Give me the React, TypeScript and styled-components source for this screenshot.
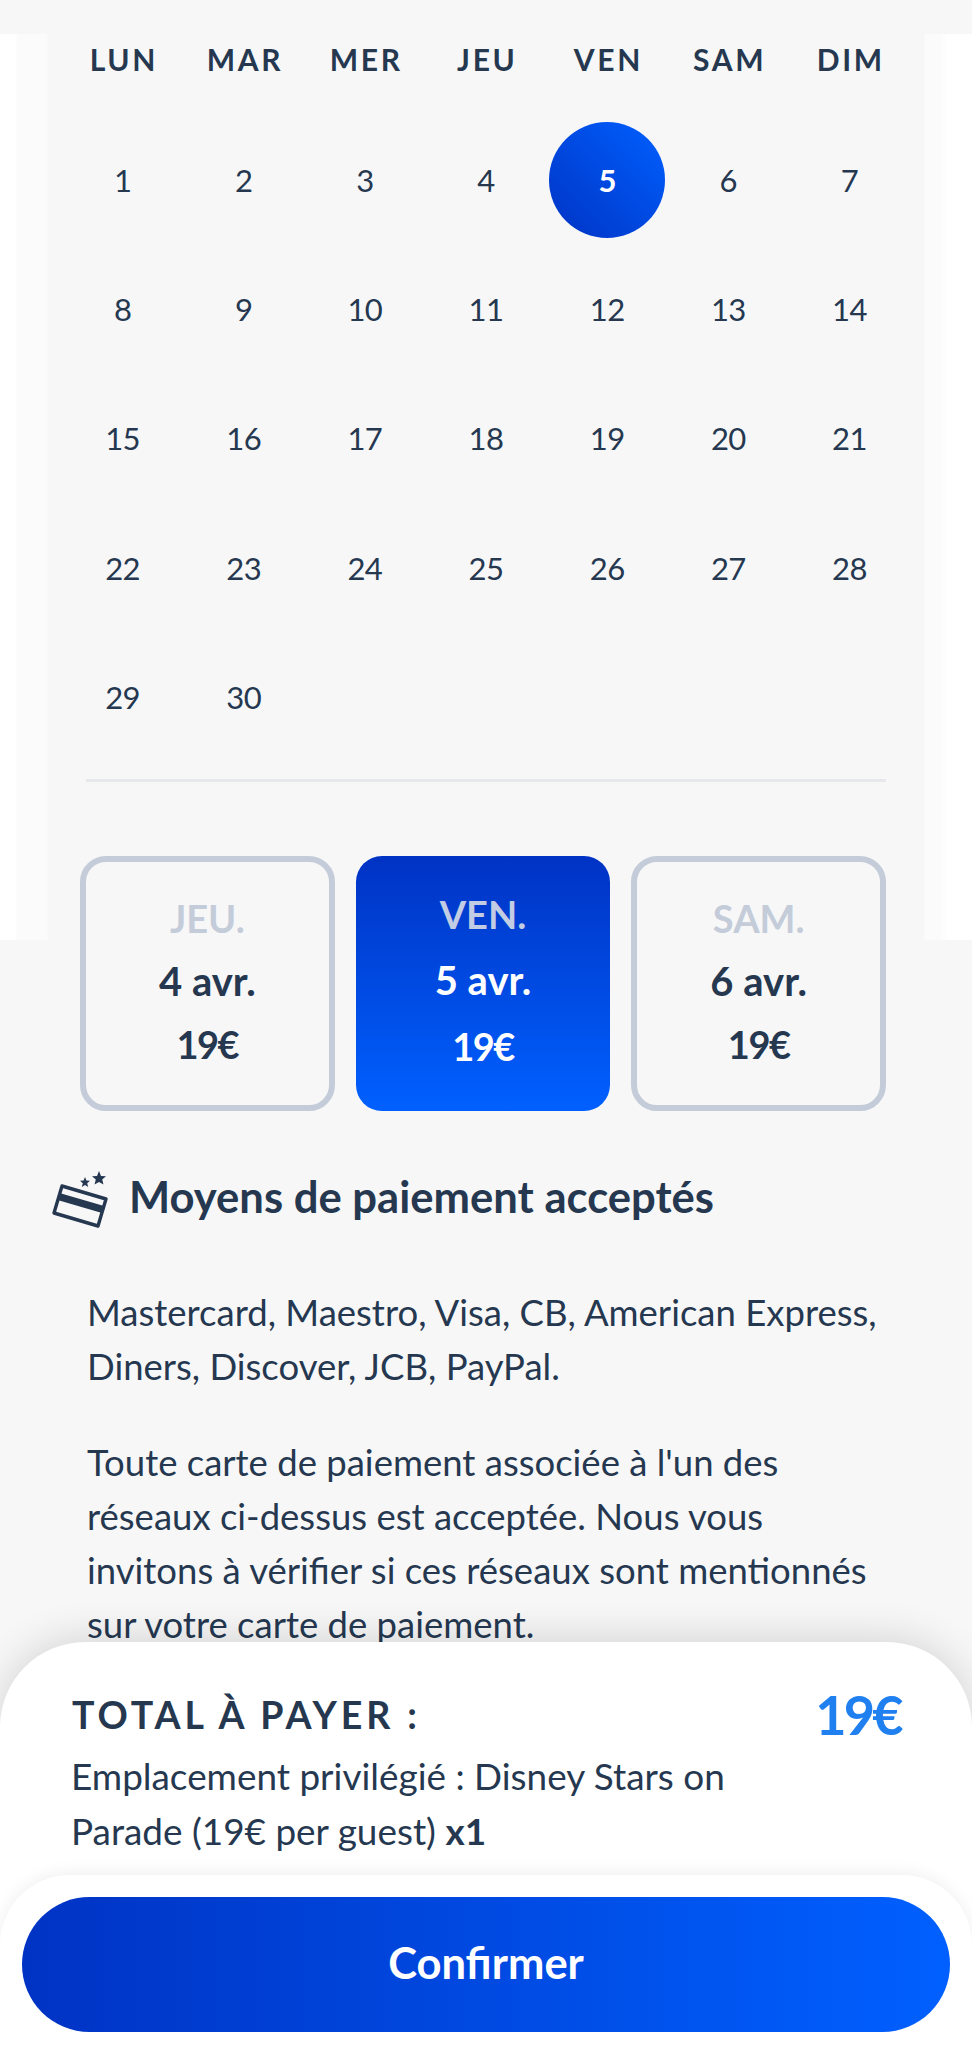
import React from "react";
import styled, { createGlobalStyle } from "styled-components";

const navy = "#253850";
const deepBlue = "#0033c4";
const brightBlue = "#0060ff";

const GlobalStyle = createGlobalStyle`
  html, body {
    margin: 0;
    padding: 0;
    background: #f7f7f8;
  }
  * {
    box-sizing: border-box;
  }
`;

const Screen = styled.div`
  background: #f7f7f8;
  color: ${navy};
  font-family: "Lato", "Open Sans", sans-serif;
  height: 2048px;
  overflow: hidden;
  position: relative;
  width: 972px;
`;

const Backdrop = styled.div`
  background: linear-gradient(
    to right,
    #ffffff 0,
    #ffffff 16px,
    #fbfbfc 17px,
    #fbfbfc 47px,
    #f7f7f8 48px,
    #f7f7f8 924px,
    #fbfbfc 925px,
    #fbfbfc 940px,
    #ffffff 948px,
    #ffffff 100%
  );
  height: 906px;
  left: 0;
  position: absolute;
  right: 0;
  top: 34px;
`;

const Content = styled.div`
  position: relative;
`;

const Weekdays = styled.div`
  display: grid;
  grid-template-columns: repeat(7, 1fr);
  height: 115px;
  margin: 0 62px;
  padding-top: 37px;
`;

const Weekday = styled.div`
  font-size: 30px;
  font-weight: 700;
  letter-spacing: 2.7px;
  line-height: 44px;
  text-align: center;
  text-indent: 2.7px;
`;

const Days = styled.div`
  display: grid;
  grid-auto-rows: 129.3px;
  grid-template-columns: repeat(7, 1fr);
  margin: 0 62px;
`;

const Day = styled.div`
  align-items: center;
  display: flex;
  font-size: 31px;
  justify-content: center;
  letter-spacing: -0.6px;
`;

const SelectedDay = styled.div`
  align-items: center;
  background: linear-gradient(to top right, ${deepBlue}, ${brightBlue});
  border-radius: 50%;
  color: #fff;
  display: flex;
  font-weight: 700;
  height: 116px;
  justify-content: center;
  width: 116px;
`;

const Divider = styled.div`
  background: #e6e8ec;
  height: 3px;
  margin: 18px 86px 0;
`;

const DateCards = styled.div`
  display: grid;
  gap: 21px;
  grid-template-columns: repeat(3, 1fr);
  margin: 74px 86px 0 80px;
`;

const DateCard = styled.div<{ $selected?: boolean }>`
  align-items: center;
  background: ${(p) =>
    p.$selected
      ? `linear-gradient(to bottom, ${deepBlue}, ${brightBlue})`
      : "transparent"};
  border: ${(p) => (p.$selected ? "none" : "6px solid #c3ccd8")};
  border-radius: 26px;
  color: ${(p) => (p.$selected ? "#fff" : navy)};
  display: flex;
  flex-direction: column;
  font-weight: 700;
  height: 255px;
  justify-content: center;
  line-height: ${(p) => (p.$selected ? "66px" : "63px")};
  padding-bottom: ${(p) => (p.$selected ? "7px" : "5px")};
`;

const CardDay = styled.div<{ $selected?: boolean }>`
  color: ${(p) => (p.$selected ? "#c2cce2" : "#c3ccd8")};
  font-size: 38px;
`;

const CardDate = styled.div`
  font-size: 40px;
`;

const CardPrice = styled.div`
  font-size: 38px;
  letter-spacing: -1.5px;
`;

const SectionTitle = styled.div`
  align-items: center;
  display: flex;
  gap: 19px;
  margin: 50px 0 54px 50px;
`;

const TitleIcon = styled.svg`
  flex: none;
  margin-top: 8px;
`;

const TitleText = styled.h2`
  font-size: 43.6px;
  font-weight: 700;
  line-height: 60px;
  margin: 0;
`;

const Paragraph = styled.p`
  font-size: 36.5px;
  line-height: 54px;
  margin: 42px 80px 0 87px;
`;

const BottomSheet = styled.div`
  background: #fff;
  border-radius: 85px 85px 0 0;
  bottom: 0;
  box-shadow: 0 -4px 40px rgba(0, 0, 0, 0.14);
  height: 406px;
  left: 0;
  position: absolute;
  right: 0;
`;

const TotalRow = styled.div`
  align-items: center;
  display: flex;
  justify-content: space-between;
  padding: 40px 71px 0 72px;
`;

const TotalLabel = styled.div`
  font-size: 37.5px;
  font-weight: 700;
  letter-spacing: 3.9px;
`;

const TotalPrice = styled.div`
  color: #2080f0;
  font-size: 54px;
  font-weight: 700;
  letter-spacing: -2.7px;
`;

const Summary = styled.p`
  font-size: 36.9px;
  line-height: 55px;
  margin: 2px 0 0 71px;
  width: 720px;
`;

const ConfirmBar = styled.div`
  background: #fff;
  border-radius: 70px 70px 0 0;
  bottom: 0;
  box-shadow: 0 -3px 16px rgba(0, 0, 0, 0.06);
  height: 173px;
  left: 0;
  padding: 22px 22px 0;
  position: absolute;
  right: 0;
`;

const ConfirmButton = styled.button`
  background: linear-gradient(to right, ${deepBlue}, ${brightBlue});
  border: none;
  border-radius: 68px;
  color: #fff;
  display: block;
  font-family: inherit;
  font-size: 43.5px;
  font-weight: 700;
  height: 135px;
  padding: 0 0 5px;
  width: 928px;
`;

const weekdays = ["LUN", "MAR", "MER", "JEU", "VEN", "SAM", "DIM"];
const days = Array.from({ length: 30 }, (_, i) => i + 1);

const cards = [
  { day: "JEU.", date: "4 avr.", price: "19€" },
  { day: "VEN.", date: "5 avr.", price: "19€", selected: true },
  { day: "SAM.", date: "6 avr.", price: "19€" },
];

function CardIcon() {
  return (
    <TitleIcon width="60" height="62" viewBox="0 0 60 62" fill="none">
      <path
        d="M12 17 L56 30 L48 57 L4 44 Z"
        stroke={navy}
        strokeWidth="3.4"
        strokeLinejoin="round"
      />
      <path d="M9.5 24 L54 37 L52 44 L7.5 31 Z" fill={navy} />
      <path
        d="M35 8 L36.4 11.6 L40 11.8 L37.2 14.2 L38.2 18 L35 16 L31.8 18 L32.8 14.2 L30 11.8 L33.6 11.6 Z"
        fill={navy}
      />
      <path
        d="M49 2 L51 7 L56 7.3 L52.2 10.6 L53.5 15.5 L49 13 L44.5 15.5 L45.8 10.6 L42 7.3 L47 7 Z"
        fill={navy}
      />
    </TitleIcon>
  );
}

export default function App(): JSX.Element {
  return (
    <Screen>
      <GlobalStyle />
      <Backdrop />
      <Content>
        <Weekdays>
          {weekdays.map((d) => (
            <Weekday key={d}>{d}</Weekday>
          ))}
        </Weekdays>
        <Days>
          {days.map((d) => (
            <Day key={d}>{d === 5 ? <SelectedDay>{d}</SelectedDay> : d}</Day>
          ))}
        </Days>
        <Divider />
        <DateCards>
          {cards.map((c) => (
            <DateCard key={c.day} $selected={c.selected}>
              <CardDay $selected={c.selected}>{c.day}</CardDay>
              <CardDate>{c.date}</CardDate>
              <CardPrice>{c.price}</CardPrice>
            </DateCard>
          ))}
        </DateCards>
        <SectionTitle>
          <CardIcon />
          <TitleText>Moyens de paiement acceptés</TitleText>
        </SectionTitle>
        <Paragraph>
          Mastercard, Maestro, Visa, CB, American Express, Diners, Discover,
          JCB, PayPal.
        </Paragraph>
        <Paragraph>
          Toute carte de paiement associée à l'un des réseaux ci-dessus est
          acceptée. Nous vous invitons à vérifier si ces réseaux sont mentionnés
          sur votre carte de paiement.
        </Paragraph>
      </Content>
      <BottomSheet>
        <TotalRow>
          <TotalLabel>TOTAL À PAYER :</TotalLabel>
          <TotalPrice>19€</TotalPrice>
        </TotalRow>
        <Summary>
          Emplacement privilégié : Disney Stars on Parade (19€ per guest){" "}
          <b>x1</b>
        </Summary>
        <ConfirmBar>
          <ConfirmButton>Confirmer</ConfirmButton>
        </ConfirmBar>
      </BottomSheet>
    </Screen>
  );
}
